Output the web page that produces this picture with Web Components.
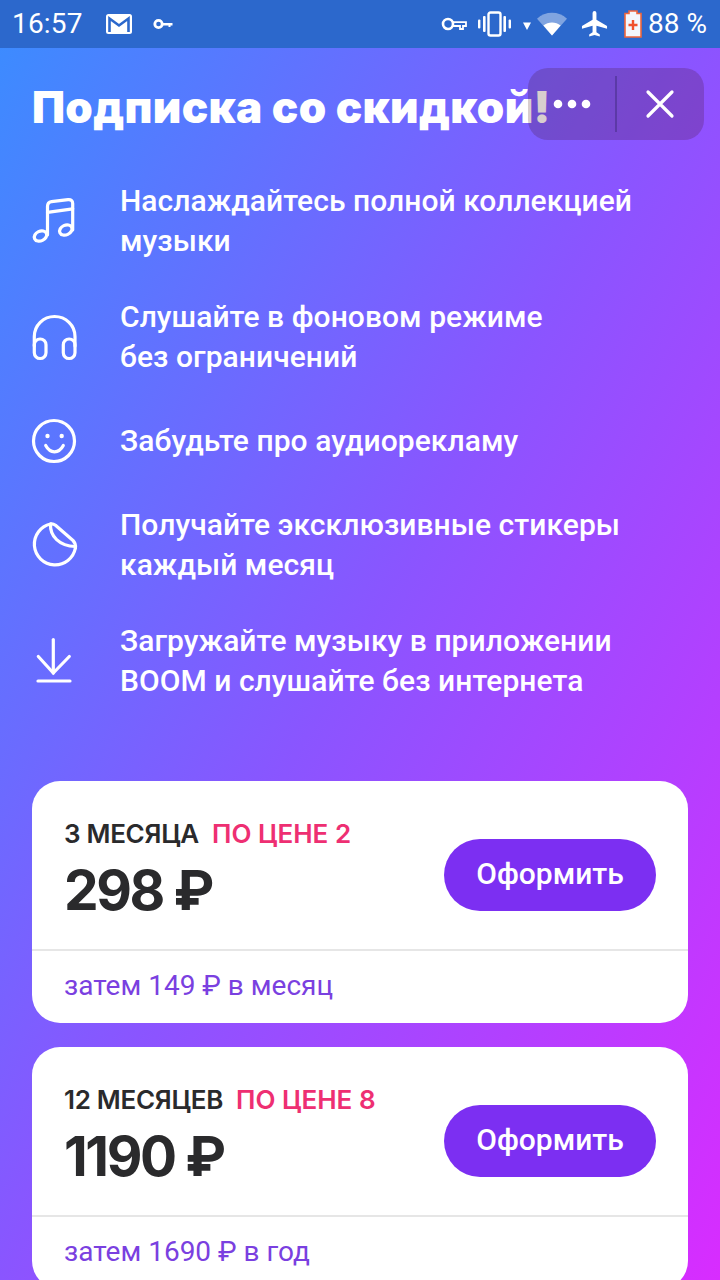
<!DOCTYPE html>
<html lang="ru">
<head>
<meta charset="utf-8">
<title>Подписка со скидкой</title>
<style>
  html, body { margin: 0; padding: 0; }
  body { width: 720px; height: 1280px; overflow: hidden; font-family: Roboto, sans-serif; }
</style>
</head>
<body>
<sub-screen>
  <status-bar slot="status"></status-bar>
  <top-actions slot="actions"></top-actions>
  <h-title slot="title">Подписка со скидкой!</h-title>

  <feature-row icon="music">Наслаждайтесь полной коллекцией<br>музыки</feature-row>
  <feature-row icon="headphones">Слушайте в фоновом режиме<br>без ограничений</feature-row>
  <feature-row icon="smile">Забудьте про аудиорекламу</feature-row>
  <feature-row icon="sticker">Получайте эксклюзивные стикеры<br>каждый месяц</feature-row>
  <feature-row icon="download">Загружайте музыку в приложении<br>BOOM и слушайте без интернета</feature-row>

  <plan-card slot="plans" period="3 МЕСЯЦА" deal="ПО ЦЕНЕ 2" price="298 ₽" then="затем 149 ₽ в месяц"></plan-card>
  <plan-card slot="plans" period="12 МЕСЯЦЕВ" deal="ПО ЦЕНЕ 8" price="1190 ₽" then="затем 1690 ₽ в год"></plan-card>
</sub-screen>

<script>
const icons = {
  music: `<path d="M15.500 37V8.500Q15.500 4.300 19.500 3.700L36 1.700Q40.700 1.200 40.700 5.500V32"/><path d="M15.500 14.300L40.700 10.800"/><ellipse cx="8.500" cy="38" rx="6.500" ry="4.800" transform="rotate(-25 8.500 38)"/><ellipse cx="33.800" cy="32" rx="6.500" ry="4.800" transform="rotate(-25 33.800 32)"/>`,
  headphones: `<path d="M2.300 32V22.500C2.300 11.300 11.300 2.500 22.600 2.500S43 11.300 43 22.500V32"/><rect x="2.300" y="25" width="11.700" height="19.500" rx="5.800"/><rect x="31.300" y="25" width="11.700" height="19.500" rx="5.800"/>`,
  smile: `<circle cx="22" cy="23" r="20.500"/><path d="M13.700 27.500C16 31.800 19 33.800 22.500 33.800S29 31.800 31.300 27.500"/><circle cx="15.500" cy="18" r="2.200" fill="#fff" stroke="none"/><circle cx="29.700" cy="18" r="2.200" fill="#fff" stroke="none"/>`,
  sticker: `<path d="M18.500 2A20.700 20.700 0 1 0 43.400 26"/><path d="M18.500 2C20.500 1.500 22 2.200 23.500 3.300L41 18.500Q44 21.500 43.400 26"/><path d="M18.500 2.500C18 14 27 24 43.400 24.500"/>`,
  download: `<path d="M21.300 1.500V35"/><path d="M6.300 18.500L21.300 35L37.300 18.500" style="stroke-linejoin:miter"/><path d="M6 43H38"/>`
};

class SubScreen extends HTMLElement {
  constructor() {
    super();
    this.attachShadow({ mode: 'open' });
    this.shadowRoot.innerHTML = `
<style>
  :host { display: block; position: relative; width: 720px; height: 1280px; overflow: hidden;
    background: linear-gradient(to bottom right, #3a8dff 0%, #8a55ff 50%, #d82cff 100%); color: #fff; }
  .title { padding: 33px 32px 0; height: 83px; }
  .features { display: flex; flex-direction: column; gap: 36px; padding: 17px 32px 0; }
  .plans { display: flex; flex-direction: column; gap: 24px; padding: 80px 32px 0; }
</style>
<slot name="status"></slot>
<slot name="actions"></slot>
<div class="title"><slot name="title"></slot></div>
<div class="features"><slot></slot></div>
<div class="plans"><slot name="plans"></slot></div>`;
  }
}
customElements.define('sub-screen', SubScreen);

class StatusBar extends HTMLElement {
  constructor() {
    super();
    this.attachShadow({ mode: 'open' });
    this.shadowRoot.innerHTML = `
<style>
  :host { display: flex; align-items: center; height: 48px; background: #2c68cc; color: #fff;
    font: 400 28px/48px Roboto, sans-serif; }
  .time { margin-left: 12px; letter-spacing: 0.2px; }
  svg { display: block; flex: none; }
  .left { display: flex; align-items: center; }
  .right { display: flex; align-items: center; margin-left: auto; }
  .pct { margin: 0 13px 0 6px; }
</style>
<div class="left">
  <span class="time">16:57</span>
  <svg style="margin-left:23px" width="26" height="20" viewBox="0 0 26 20"><rect width="26" height="20" rx="2.500" fill="#fff"/><path d="M3.500 18V4.500L13 11.500L22.500 4.500V18" fill="none" stroke="#2c68cc" stroke-width="2.600"/></svg>
  <svg style="margin-left:21px" width="20" height="12" viewBox="0 0 20 12"><circle cx="5.500" cy="6" r="3.700" fill="none" stroke="#fff" stroke-width="2.800"/><path d="M9 5H19.500V7.500H17.500V9H15.500V7.500H9Z" fill="#fff"/></svg>
</div>
<div class="right">
  <svg width="26" height="16" viewBox="0 0 26 16"><circle cx="7" cy="8" r="5" fill="none" stroke="#fff" stroke-width="2.600"/><path d="M12 6.200H25V10H22V13H19V10H12Z" fill="none" stroke="#fff" stroke-width="1.800"/></svg>
  <svg style="margin-left:11px" width="33" height="26" viewBox="0 0 33 26" fill="#fff"><rect x="10.500" y="1.500" width="12" height="23" rx="2" fill="none" stroke="#fff" stroke-width="2.400"/><rect x="5" y="5" width="2.600" height="16" rx="1"/><rect x="25.400" y="5" width="2.600" height="16" rx="1"/><rect x="0" y="8.500" width="2.400" height="9" rx="1"/><rect x="30.600" y="8.500" width="2.400" height="9" rx="1"/></svg>
  <svg style="margin-left:12px;margin-top:4px" width="8" height="8" viewBox="0 0 8 8"><path d="M0 .5H8L4 8Z" fill="#fff"/></svg>
  <svg style="margin-left:6px" width="30" height="24" viewBox="0 0 31 24"><path d="M0 6.500C8.500-1.500 22.500-1.500 31 6.500L15.500 24Z" fill="#fff" opacity=".4"/><path d="M6.600 13.500C11.600 9.500 19.400 9.500 24.400 13.500L15.500 24Z" fill="#fff"/></svg>
  <svg style="margin-left:14px" width="27" height="28" viewBox="0 0 28 28"><path d="M12 2.500Q12 .5 14 .5T16 2.500V9.500L27 16V19L16 15.800V22.500L19.500 25V27L14 25.500L8.500 27V25L12 22.500V15.800L1 19V16L12 9.500Z" fill="#fff"/></svg>
  <svg style="margin-left:16px;margin-top:-1px" width="18" height="28" viewBox="0 0 18 28"><path d="M5 1H13V3.500H17V27H1V3.500H5Z" fill="#fff" fill-opacity=".95" stroke="#f0663c" stroke-width="1.600"/><path d="M9 10V20M4.500 15H13.500" stroke="#f0502c" stroke-width="2.400"/></svg>
  <span class="pct">88 %</span>
</div>`;
  }
}
customElements.define('status-bar', StatusBar);

class TopActions extends HTMLElement {
  constructor() {
    super();
    this.attachShadow({ mode: 'open' });
    this.shadowRoot.innerHTML = `
<style>
  :host { position: absolute; left: 528px; top: 68px; width: 176px; height: 72px; display: flex; align-items: center;
    border-radius: 20px; background: rgba(60, 10, 10, 0.2); z-index: 2; }
  .btn { flex: 1; display: flex; align-items: center; justify-content: center; height: 72px; }
  .sep { flex: none; width: 2px; height: 56px; background: rgba(60, 40, 120, 0.45); }
  svg { display: block; }
  .close { margin-right: 1px; }
</style>
<div class="btn"><svg width="38" height="10" viewBox="0 0 38 10" fill="#fff"><circle cx="5" cy="5" r="4.300"/><circle cx="19" cy="5" r="4.300"/><circle cx="33" cy="5" r="4.300"/></svg></div>
<div class="sep"></div>
<div class="btn"><svg class="close" width="30" height="30" viewBox="0 0 30 30"><path d="M3 3L27 27M27 3L3 27" stroke="#fff" stroke-width="3.200" stroke-linecap="round"/></svg></div>`;
  }
}
customElements.define('top-actions', TopActions);

class HTitle extends HTMLElement {
  constructor() {
    super();
    this.attachShadow({ mode: 'open' });
    this.shadowRoot.innerHTML = `
<style>
  :host { display: block; font: 900 44px/52px Inter, sans-serif; letter-spacing: 0.35px; color: #fff; white-space: nowrap; }
</style>
<slot></slot>`;
  }
}
customElements.define('h-title', HTitle);

class FeatureRow extends HTMLElement {
  constructor() {
    super();
    this.attachShadow({ mode: 'open' });
    const icon = this.getAttribute('icon');
    this.shadowRoot.innerHTML = `
<style>
  :host { display: flex; align-items: center; min-height: 56px; }
  .icon { flex: none; width: 88px; display: flex; align-items: center; }
  svg { display: block; fill: none; stroke: #fff; stroke-width: 3.200; stroke-linecap: round; stroke-linejoin: round; overflow: visible; }
  .text { font: 500 30px/40px Roboto, sans-serif; letter-spacing: 0.05px; color: #fff; white-space: nowrap; }
</style>
<div class="icon"><svg width="46" height="46" viewBox="0 0 46 46">${icons[icon]}</svg></div>
<div class="text"><slot></slot></div>`;
  }
}
customElements.define('feature-row', FeatureRow);

class PlanCard extends HTMLElement {
  constructor() {
    super();
    this.attachShadow({ mode: 'open' });
    this.shadowRoot.innerHTML = `
<style>
  :host { display: block; background: #fff; border-radius: 28px; height: 242px; overflow: hidden; flex: none; }
  .top { display: flex; align-items: flex-start; justify-content: space-between; height: 170px; box-sizing: border-box;
    padding: 37px 32px 0; border-bottom: 2px solid #e6e6e6; }
  .head { font: 600 26px/32px Inter, sans-serif; color: #2a2a2c; white-space: nowrap; letter-spacing: -0.3px; }
  .deal { color: #ee2f72; margin-left: 13px; letter-spacing: 0; }
  .price { font: 700 55px/64px Inter, sans-serif; color: #2a2a2c; margin-top: 8px; white-space: nowrap; letter-spacing: -2.4px; }
  .buy { display: flex; align-items: center; justify-content: center; width: 212px; height: 72px; border-radius: 36px; margin-top: 21px;
    box-sizing: border-box; padding-bottom: 3px;
    background: #7c2ff2; color: #fff; font: 500 30px/36px Roboto, sans-serif; }
  .then { padding: 0 32px; font: 400 28px/70px Roboto, sans-serif; color: #7a40e0; white-space: nowrap; }
</style>
<div class="top">
  <div>
    <div class="head">${this.getAttribute('period')}<span class="deal">${this.getAttribute('deal')}</span></div>
    <div class="price">${this.getAttribute('price')}</div>
  </div>
  <div class="buy">Оформить</div>
</div>
<div class="then">${this.getAttribute('then')}</div>`;
  }
}
customElements.define('plan-card', PlanCard);
</script>
</body>
</html>
